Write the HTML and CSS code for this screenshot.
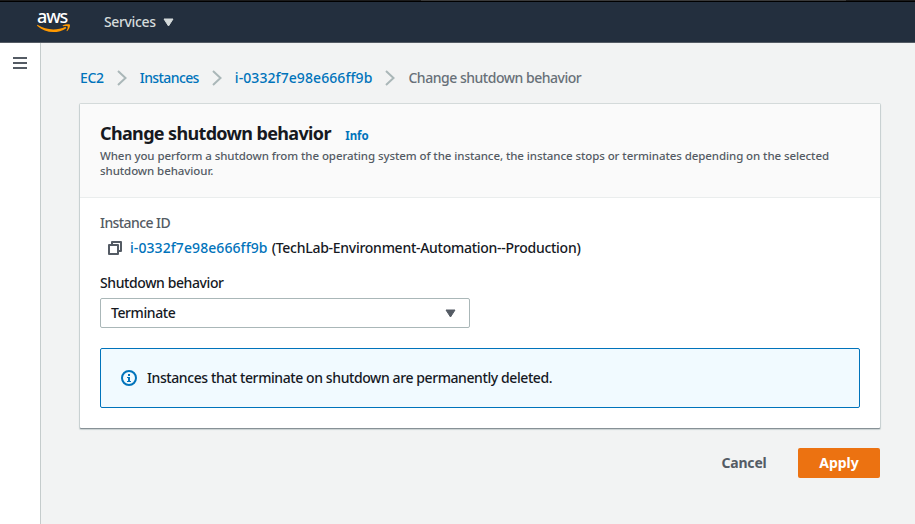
FILE: index.html
```html
<!DOCTYPE html>
<html lang="en">
<head>
<meta charset="utf-8">
<title>Change shutdown behavior</title>
<link rel="stylesheet" href="styles.css">
</head>
<body>
<div class="strip"><span class="strip-tab"></span></div>
<header class="topbar">
  <a class="logo"><span class="logo-text">aws</span>
    <svg class="smile" width="34" height="9" viewBox="0 0 34 9"><path d="M.4 .8C9 6.400 20 6.800 28.500 2.700L29.300 4.200C20.500 10 8.500 9.500 0 1.700Z" fill="#f90"/><path d="M25.500 1.500C28 .1 31.200-.1 32.800.5C33.500 2 32 5.500 30 7.200L29.500 6.700C30.500 4.800 31 3 30.700 2.400C30 1.900 28 2.100 26 2.300Z" fill="#f90"/></svg>
  </a>
  <nav class="services"><span>Services</span><svg width="11" height="9" viewBox="0 0 11 9"><path d="M1 1H10L5.500 8Z" fill="#d5dbdb" stroke="#d5dbdb" stroke-linejoin="round"/></svg></nav>
</header>
<div class="shell">
  <aside class="rail"><svg width="14" height="12" viewBox="0 0 14 12"><path d="M0 1H14M0 6H14M0 11H14" stroke="#545b64" stroke-width="2"/></svg></aside>
  <main>
    <nav class="crumbs">
      <a class="c1">EC2</a><svg class="chev" viewBox="0 0 10 16"><path d="M1 1L8.500 8L1 15"/></svg>
      <a class="c2">Instances</a><svg class="chev" viewBox="0 0 10 16"><path d="M1 1L8.500 8L1 15"/></svg>
      <a class="c3">i-0332f7e98e666ff9b</a><svg class="chev" viewBox="0 0 10 16"><path d="M1 1L8.500 8L1 15"/></svg>
      <span class="c4">Change shutdown behavior</span>
    </nav>
    <section class="card">
      <div class="card-head">
        <div class="title-row"><h1>Change shutdown behavior</h1><a class="info">Info</a></div>
        <p>When you perform a shutdown from the operating system of the instance, the instance stops or terminates depending on the selected<br>shutdown behaviour.</p>
      </div>
      <div class="card-body">
        <div class="label muted">Instance ID</div>
        <div class="instance"><svg width="14" height="14" viewBox="0 0 14 14" fill="none" stroke="#545b64" stroke-width="2" stroke-linejoin="round"><path d="M4 4V1H13V10H10M1 4H10V13H1Z"/></svg><a class="id">i-0332f7e98e666ff9b</a><span class="name">(TechLab-Environment-Automation--Production)</span></div>
        <div class="label behavior">Shutdown behavior</div>
        <div class="select"><span>Terminate</span><svg width="11" height="9" viewBox="0 0 11 9"><path d="M1 1H10L5.500 8Z" fill="#545b64" stroke="#545b64" stroke-linejoin="round"/></svg></div>
        <div class="alert"><svg width="16" height="16" viewBox="0 0 16 16"><circle cx="8" cy="8" r="7" fill="none" stroke="#0073bb" stroke-width="2"/><path d="M7 4H9V6H7ZM6 7H9V11H10V12H6V11H7V8H6Z" fill="#0073bb"/></svg><span>Instances that terminate on shutdown are permanently deleted.</span></div>
      </div>
    </section>
    <div class="actions"><button class="cancel">Cancel</button><button class="apply">Apply</button></div>
  </main>
</div>
</body>
</html>
```
FILE: styles.css
```css
* { box-sizing: border-box; }
body { margin: 0; height: 524px; overflow: hidden; background: #f2f3f3; color: #16191f; font: 500 14px/20px "Noto Sans", "Open Sans", sans-serif; white-space: nowrap; }
svg { flex: none; display: block; }
.strip { height: 2px; background: #1b1b1b; border-bottom: 1px solid #000; }
.strip-tab { display: block; height: 1px; width: 425px; margin-left: 421px; background: #3a3a3a; }
.topbar { height: 41px; background: #232f3e; border-bottom: 1px solid #545b64; display: flex; align-items: flex-start; }
.logo { width: 34px; margin: 6px 0 0 37px; display: flex; flex-direction: column; color: #fff; }
.logo-text { height: 16px; font: 500 18px/17px "Noto Sans", sans-serif; letter-spacing: -1.1px; }
.services { display: flex; align-items: center; gap: 7px; margin: 10px 0 0 33px; color: #d5dbdb; letter-spacing: -.36px; }
.shell { display: flex; height: 481px; }
.rail { width: 41px; background: #fff; border-right: 1px solid #c5cccc; padding: 14px 0 0 13px; }
main { width: 800px; margin-left: 39px; padding-top: 25px; }
.crumbs { display: flex; align-items: center; height: 20px; color: #687078; }
a { color: #0073bb; }
.chev { width: 10px; height: 16px; margin: 0 13px; fill: none; stroke: #aab7b8; stroke-width: 2; }
.c1 { letter-spacing: -.3px; }
.c2 { letter-spacing: -.6px; }
.c3 { letter-spacing: .08px; }
.c4 { letter-spacing: -.48px; }
.card { margin-top: 16px; height: 324px; background: #fff; border-radius: 1px; box-shadow: 0 1px 0 0 #879196, 0 1px 1px 1px #c8d0d1, 0 0 0 1px #d5dbdb; }
.card-head { height: 94px; padding: 18px 20px 0; background: #fafafa; border-bottom: 1px solid #eaeded; }
.title-row { display: flex; align-items: baseline; height: 22px; line-height: 22px; }
h1 { margin: 0; font-size: 18px; font-weight: 700; line-height: 22px; letter-spacing: -.65px; }
.info { font-size: 11.5px; font-weight: 700; margin-left: 14.5px; letter-spacing: -.1px; }
.card-head p { margin: 4px 0 0; font-size: 11.5px; line-height: 15px; color: #545b64; letter-spacing: -.08px; }
.card-body { padding: 15px 20px 0; }
.label { letter-spacing: -.4px; }
.muted { color: #545b64; letter-spacing: -.58px; }
.instance { display: flex; align-items: center; height: 20px; margin-top: 5px; padding-left: 8px; }
.id { margin-left: 8px; letter-spacing: .08px; }
.name { margin-left: 4px; letter-spacing: -.27px; }
.behavior { margin-top: 15px; }
.select { width: 370px; height: 30px; margin-top: 5px; padding: 0 13px 0 10px; border: 1px solid #aab7b8; border-radius: 2px; display: flex; align-items: center; justify-content: space-between; letter-spacing: -.42px; }
.alert { height: 60px; margin-top: 20px; padding-left: 20px; border: 1px solid #0073bb; border-radius: 2px; background: #f1faff; display: flex; align-items: center; gap: 10px; letter-spacing: -.41px; }
.actions { display: flex; justify-content: flex-end; margin-top: 20px; }
button { height: 30px; padding: 0; border: 0; border-radius: 2px; font: 700 14px/30px "Noto Sans", sans-serif; background: none; color: #545b64; }
.cancel { width: 86px; margin-right: 11px; letter-spacing: -.2px; }
.apply { width: 82px; background: #ec7211; color: #fff; }
```
